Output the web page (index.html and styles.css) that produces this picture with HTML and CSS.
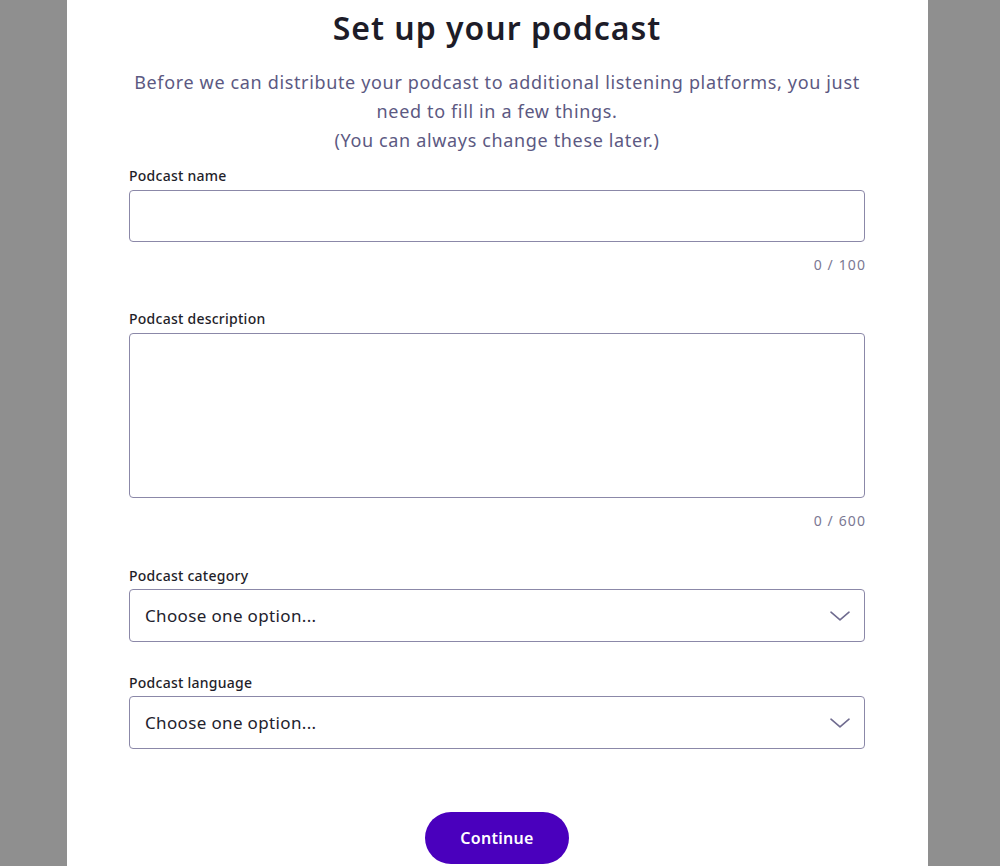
FILE: index.html
```html
<!DOCTYPE html>
<html lang="en">
<head>
<meta charset="utf-8">
<title>Set up your podcast</title>
<link rel="stylesheet" href="styles.css">
</head>
<body>
<main class="panel">
  <h1 class="title">Set up your podcast</h1>
  <p class="intro">Before we can distribute your podcast to additional listening platforms, you just need to fill in a few things.<br>(You can always change these later.)</p>
  <form class="form">
    <div class="field">
      <label class="label" for="name">Podcast name</label>
      <input class="input" id="name" type="text">
      <div class="counter">0 / 100</div>
    </div>
    <div class="field">
      <label class="label" for="desc">Podcast description</label>
      <textarea class="input textarea" id="desc"></textarea>
      <div class="counter">0 / 600</div>
    </div>
    <div class="field field-cat">
      <label class="label label-select" for="cat">Podcast category</label>
      <div class="select" id="cat">
        <span class="select-text">Choose one option...</span>
        <svg class="chevron" width="20" height="10" viewBox="0 0 20 10"><path d="M1 1.2 L10 8.8 L19 1.2" fill="none" stroke="#6f6b8f" stroke-width="1.6" stroke-linecap="round" stroke-linejoin="round"/></svg>
      </div>
    </div>
    <div class="field field-lang">
      <label class="label label-select" for="lang">Podcast language</label>
      <div class="select" id="lang">
        <span class="select-text">Choose one option...</span>
        <svg class="chevron" width="20" height="10" viewBox="0 0 20 10"><path d="M1 1.2 L10 8.8 L19 1.2" fill="none" stroke="#6f6b8f" stroke-width="1.6" stroke-linecap="round" stroke-linejoin="round"/></svg>
      </div>
    </div>
    <div class="actions">
      <button class="btn" type="button">Continue</button>
    </div>
  </form>
</main>
</body>
</html>
```

FILE: styles.css
```css
* { box-sizing: border-box; }
html, body { margin: 0; padding: 0; }
body {
  background: #8f8f8f;
  font-family: "Noto Sans", "Open Sans", sans-serif;
  height: 866px;
  overflow: hidden;
}
.panel {
  width: 861px;
  margin-left: 67px;
  min-height: 866px;
  background: #ffffff;
  padding: 8px 63px 0 62px;
}
.title {
  margin: 0;
  text-align: center;
  font-size: 32px;
  line-height: 40px;
  font-weight: 600;
  color: #1d1c28;
  letter-spacing: 1px;
}
.intro {
  margin: 20px 0 0;
  text-align: center;
  font-size: 18px;
  line-height: 29px;
  color: #5c5982;
  letter-spacing: 0.65px;
}
.form {
  margin-top: 11px;
  display: flex;
  flex-direction: column;
}
.field {
  display: flex;
  flex-direction: column;
}
.field + .field { margin-top: 34px; }
.field-cat.field { margin-top: 35px; }
.field-lang.field { margin-top: 31px; }
.label {
  font-size: 14px;
  line-height: 20px;
  font-weight: 500;
  color: #1f1e2a;
  margin-bottom: 4px;
  letter-spacing: 0.25px;
}
.label-select { margin-bottom: 3px; }
.input {
  display: block;
  width: 100%;
  height: 52px;
  border: 1px solid #8b88a8;
  border-radius: 4px;
  background: #fff;
  font: inherit;
  padding: 0 15px;
  margin: 0;
}
.textarea {
  height: 165px;
  resize: none;
}
.counter {
  margin-top: 13px;
  text-align: right;
  font-size: 14px;
  line-height: 20px;
  color: #7b7893;
  letter-spacing: 1.1px;
  margin-right: -1px;
}
.select {
  height: 53px;
  border: 1px solid #8b88a8;
  border-radius: 4px;
  display: flex;
  align-items: center;
  justify-content: space-between;
  padding: 0 14px 0 15px;
}
.select-text {
  font-size: 17px;
  color: #23222d;
  letter-spacing: 0.35px;
}
.chevron { display: block; }
.actions {
  display: flex;
  justify-content: center;
  margin-top: 63px;
}
.btn {
  width: 144px;
  height: 52px;
  border: 0;
  border-radius: 26px;
  background: #4a00bd;
  color: #fff;
  font-family: inherit;
  font-size: 16px;
  font-weight: 600;
  letter-spacing: 0.3px;
  cursor: pointer;
}
```
